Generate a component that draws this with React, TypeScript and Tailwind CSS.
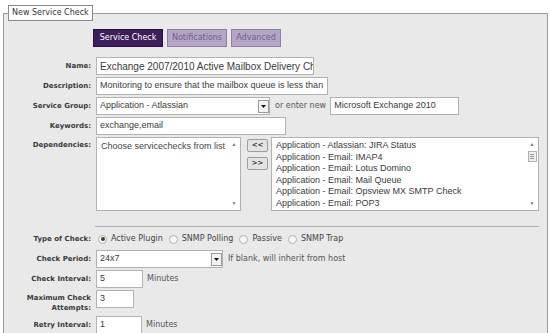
import React from 'react'

const ui = "font-['DejaVu_Sans','Verdana',sans-serif]"
const arial = "font-['Liberation_Sans',Arial,sans-serif]"
const labelCls = `w-[87px] shrink-0 text-right font-bold text-[7px] leading-[10px] text-[#3a3a3a] ${ui}`
const boxCls = `h-[18px] border border-[#b3b3b3] bg-white px-[3px] flex items-center overflow-hidden whitespace-nowrap text-[9px] text-[#3a3a3a] ${arial}`

function Row({ label, children, top = false, className = '' }: { label: React.ReactNode; children?: React.ReactNode; top?: boolean; className?: string }) {
  return (
    <div className={`flex ${top ? 'items-start' : 'items-center'} ${className}`}>
      <div className={`${labelCls} ${top ? 'pt-[3px]' : ''}`}>{label}</div>
      <div className="ml-[5px] flex items-center">{children}</div>
    </div>
  )
}

function Arrow() {
  return (
    <span className="ml-auto mr-[-1px] flex h-[13px] w-[11px] shrink-0 items-center justify-center border border-[#9a9a9a] bg-[#f2f2f2]">
      <svg width="5" height="3" viewBox="0 0 5 3"><path d="M0 0h5L2.5 3z" fill="#111" /></svg>
    </span>
  )
}

function Select({ value, width }: { value: string; width: string }) {
  return (
    <div className={`${boxCls} ${width} pr-[1px]`}>
      <span>{value}</span>
      <Arrow />
    </div>
  )
}

function Radio({ on = false }: { on?: boolean }) {
  return (
    <span className="flex h-[9px] w-[9px] shrink-0 items-center justify-center rounded-full border border-[#b0b0b0] bg-[#f6f6f6]">
      {on && <span className="h-[4px] w-[4px] rounded-full bg-[#2f4a30]" />}
    </span>
  )
}

function Tab({ children, active = false, width }: { children: React.ReactNode; active?: boolean; width: string }) {
  return (
    <div
      className={`flex h-[18px] ${width} items-center justify-center border text-[8px] ${ui} ${
        active ? 'border-[#2c1045] bg-[#3d1d5a] text-white' : 'border-[#8e7ea4] bg-[#b4a5c7] text-[#6f5c8a]'
      }`}
    >
      {children}
    </div>
  )
}

const deps = [
  'Application - Atlassian: JIRA Status',
  'Application - Email: IMAP4',
  'Application - Email: Lotus Domino',
  'Application - Email: Mail Queue',
  'Application - Email: Opsview MX SMTP Check',
  'Application - Email: POP3',
]

export default function App() {
  return (
    <div className="h-[333px] w-[550px] overflow-hidden bg-white pt-[5px]">
      <fieldset className="ml-[3px] h-[360px] w-[545px] border border-[#9b9b9b] bg-[#e9e9e9]">
        <legend className={`ml-[4px] h-[16px] border border-[#8a8a8a] bg-white px-[3px] text-[8px] leading-[14px] text-[#333] ${ui}`}>
          New Service Check
        </legend>

        <div className="ml-[89px] mt-[8px] flex gap-[4px]">
          <Tab active width="w-[70px]">Service Check</Tab>
          <Tab width="w-[60px]">Notifications</Tab>
          <Tab width="w-[50px]">Advanced</Tab>
        </div>

        <div className="mt-[10px] flex flex-col gap-[2px]">
          <Row label="Name:">
            <div className={`${boxCls} w-[218px]`}>
              <span className="text-[10px]">Exchange 2007/2010 Active Mailbox Delivery Check</span>
            </div>
          </Row>
          <Row label="Description:">
            <div className={`${boxCls} w-[232px]`}>Monitoring to ensure that the mailbox queue is less than</div>
          </Row>
          <Row label="Service Group:">
            <Select value="Application - Atlassian" width="w-[174px]" />
            <span className={`ml-[5px] text-[8px] text-[#555] ${ui}`}>or enter new</span>
            <div className={`${boxCls} ml-[4px] w-[129px]`}>Microsoft Exchange 2010</div>
          </Row>
          <Row label="Keywords:">
            <div className={`${boxCls} w-[190px]`}>exchange,email</div>
          </Row>
          <Row label="Dependencies:" top>
            <div className="flex items-start">
              <div className={`flex h-[74px] w-[145px] border border-[#b3b3b3] bg-white text-[9px] text-[#444] ${arial}`}>
                <div className="flex-1 pl-[4px] pt-[2px] leading-[12px]">Choose servicechecks from list</div>
                <div className="flex w-[12px] flex-col items-center justify-between py-[3px] text-[5px] text-[#777]">
                  <span>▲</span>
                  <span>▼</span>
                </div>
              </div>
              <div className="ml-[6px] mt-[2px] flex flex-col gap-[5px]">
                <button className={`h-[13px] w-[21px] rounded-[2px] border border-[#9d9d9d] bg-[#e3e3e3] text-[7px] font-bold leading-[11px] text-[#333] ${ui}`}>&lt;&lt;</button>
                <button className={`h-[13px] w-[21px] rounded-[2px] border border-[#9d9d9d] bg-[#e3e3e3] text-[7px] font-bold leading-[11px] text-[#333] ${ui}`}>&gt;&gt;</button>
              </div>
              <div className={`ml-[3px] flex h-[74px] w-[268px] border border-[#b3b3b3] bg-white text-[9px] text-[#3a3a3a] ${arial}`}>
                <div className="flex-1 pl-[4px] pt-[2px] leading-[11.5px]">
                  {deps.map(d => (
                    <div key={d} className="whitespace-nowrap">{d}</div>
                  ))}
                </div>
                <div className="flex w-[12px] flex-col items-center py-[3px] text-[5px] text-[#777]">
                  <span>▲</span>
                  <span className="mt-[2px] flex h-[11px] w-[9px] flex-col items-center justify-center gap-[1px] border border-[#b0b0b0] bg-[#efefef]">
                    <span className="h-px w-[4px] bg-[#999]" />
                    <span className="h-px w-[4px] bg-[#999]" />
                    <span className="h-px w-[4px] bg-[#999]" />
                  </span>
                  <span className="mt-auto">▼</span>
                </div>
              </div>
            </div>
          </Row>
        </div>

        <div className="ml-[91px] mt-[15px] h-px w-[444px] bg-[#b0b0b0]" />

        <div className="mt-[5px] flex flex-col">
          <Row label="Type of Check:" className="h-[14px]">
            <div className={`flex items-center text-[8px] text-[#444] ${ui}`}>
              <span className="ml-[2px]"><Radio on /></span>
              <span className="ml-[4px]">Active Plugin</span>
              <span className="ml-[6px]"><Radio /></span>
              <span className="ml-[4px]">SNMP Polling</span>
              <span className="ml-[6px]"><Radio /></span>
              <span className="ml-[4px]">Passive</span>
              <span className="ml-[6px]"><Radio /></span>
              <span className="ml-[4px]">SNMP Trap</span>
            </div>
          </Row>
          <Row label="Check Period:" className="mt-[4px]">
            <Select value="24x7" width="w-[127px]" />
            <span className={`ml-[5px] text-[8px] text-[#555] ${ui}`}>If blank, will inherit from host</span>
          </Row>
          <Row label="Check Interval:" className="mt-[2px]">
            <div className={`${boxCls} w-[47px]`}>5</div>
            <span className={`ml-[4px] text-[8px] text-[#555] ${ui}`}>Minutes</span>
          </Row>
          <Row label={<>Maximum Check<br />Attempts:</>} top className="mt-[2px] h-[24px]">
            <div className={`${boxCls} w-[38px]`}>3</div>
          </Row>
          <Row label="Retry Interval:" className="mt-[2px]">
            <div className={`${boxCls} w-[46px]`}>1</div>
            <span className={`ml-[4px] text-[8px] text-[#555] ${ui}`}>Minutes</span>
          </Row>
        </div>
      </fieldset>
    </div>
  )
}
